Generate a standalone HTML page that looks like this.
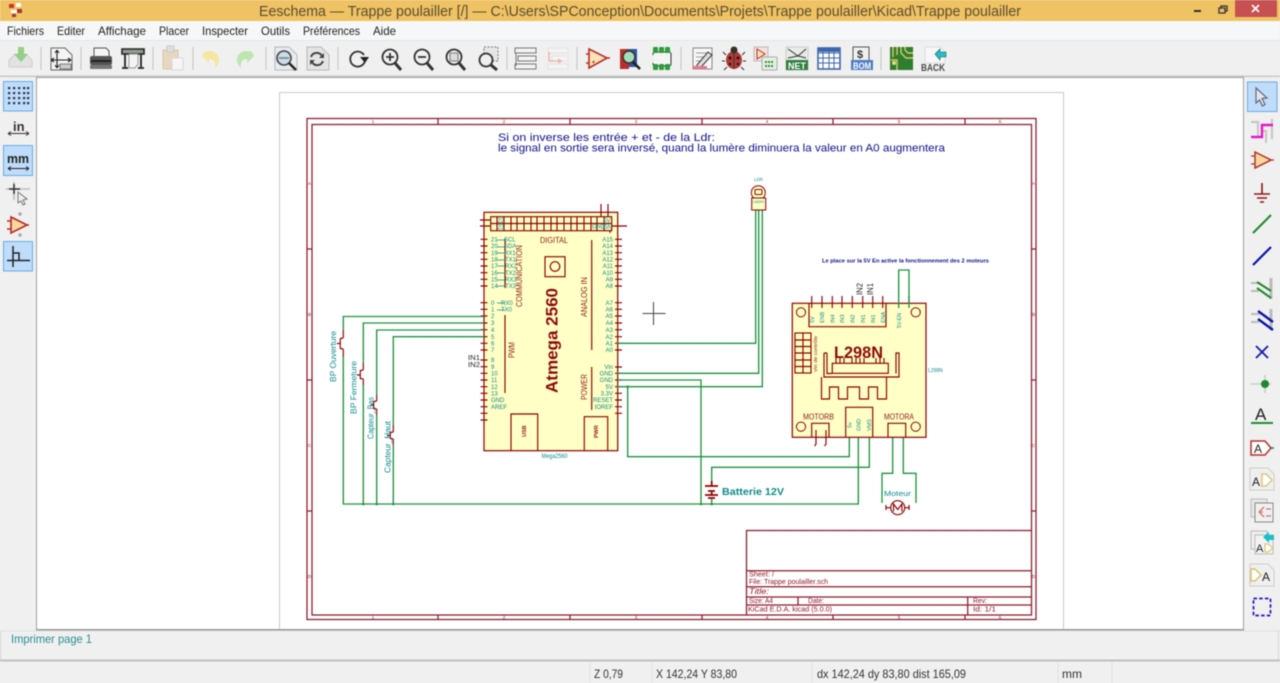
<!DOCTYPE html>
<html lang="fr"><head><meta charset="utf-8"><title>Eeschema</title>
<style>
html,body{margin:0;padding:0;background:#f0f0f0;width:1280px;height:683px;overflow:hidden}
svg{display:block;filter:blur(.5px)}
text{font-family:"Liberation Sans",sans-serif}
.r{stroke:#8c1a2a;fill:none;stroke-width:1.25}
.s{stroke:#8c0000;fill:none;stroke-width:1.15}
.w{stroke:#1f9440;fill:none;stroke-width:1.35}
.t{fill:#108a8a;font-size:6px}
.m{fill:#222;font-size:12px}
.st{fill:#333;font-size:12px}
.d{fill:#8c1a1a;font-size:8px}
</style></head><body>
<svg width="1280" height="683" viewBox="0 0 1280 683" xmlns="http://www.w3.org/2000/svg">
<!-- window chrome -->
<rect width="1280" height="683" fill="#f0f0f0"/>
<rect width="1280" height="21" fill="#efc263"/>
<rect y="21" width="1280" height="20" fill="#f6f7f8"/>
<rect y="41" width="1280" height="35" fill="#f0f0f0"/>
<rect y="40" width="1280" height="1" fill="#e6e6e6"/>
<text x="259" y="16" font-size="14.5" fill="#5a4d33" textLength="762" lengthAdjust="spacingAndGlyphs">Eeschema — Trappe poulailler [/] — C:\Users\SPConception\Documents\Projets\Trappe poulailler\Kicad\Trappe poulailler</text>
<g transform="translate(9,3)"><rect x="0" y="1" width="5" height="4" fill="#c33"/><rect x="7" y="0" width="5" height="4" fill="#fff"/><rect x="2" y="7" width="6" height="3" fill="#fff"/><rect x="8" y="6" width="5" height="4" fill="#a33"/><rect x="3" y="11" width="4" height="3" fill="#a33"/></g>
<rect x="1235" y="0" width="42" height="17" fill="#c75050"/>
<path d="M1252 5l7 7M1259 5l-7 7" stroke="#fff" stroke-width="1.6"/>
<rect x="1194" y="10" width="7" height="2" fill="#333"/>
<path d="M1219 8h6v5h-6zM1221 8V6h6v5h-2" fill="none" stroke="#333" stroke-width="1.3"/>
<text class="m" x="7" y="35" textLength="37" lengthAdjust="spacingAndGlyphs">Fichiers</text>
<text class="m" x="57" y="35" textLength="28" lengthAdjust="spacingAndGlyphs">Editer</text>
<text class="m" x="98" y="35" textLength="48" lengthAdjust="spacingAndGlyphs">Affichage</text>
<text class="m" x="159" y="35" textLength="30" lengthAdjust="spacingAndGlyphs">Placer</text>
<text class="m" x="202" y="35" textLength="46" lengthAdjust="spacingAndGlyphs">Inspecter</text>
<text class="m" x="261" y="35" textLength="29" lengthAdjust="spacingAndGlyphs">Outils</text>
<text class="m" x="303" y="35" textLength="57" lengthAdjust="spacingAndGlyphs">Préférences</text>
<text class="m" x="373" y="35" textLength="23" lengthAdjust="spacingAndGlyphs">Aide</text>
<!-- separators -->
<path d="M41 47v23M81 47v23M153 47v23M193 47v23M266 47v23M338 47v23M507 47v23M577 47v23M681 47v23M881 47v23" stroke="#c4c4c4"/>

<!-- TOP ICONS -->
<g id="ti">
<!-- open -->
<path d="M9 67v-7l6-6h4v6h3v-6h4l6 6v7z" fill="#e2e2e2" stroke="#d0d0d0"/>
<path d="M22 47h6v7h4l-7 8-7-8h4z" fill="#93cf85" transform="translate(-4,0)"/>
<!-- page settings -->
<path d="M51 48h14l7 7v15H51z" fill="#f4f4f4" stroke="#666"/>
<path d="M57 50v18M51 60h20M57 50l-2 3M57 50l2 3M57 68l-2-3M57 68l2-3M51 60l3-2M51 60l3 2M71 60l-3-2M71 60l-3 2" stroke="#222" fill="none" stroke-width="1.1"/>
<rect x="60" y="64" width="11" height="5" fill="#ccc" stroke="#555" stroke-width=".7"/>
<!-- print -->
<path d="M94 48h12l3 3v6H94z" fill="#f4f4f4" stroke="#555"/>
<rect x="90" y="56" width="22" height="9" rx="2" fill="#555"/>
<rect x="91" y="60" width="20" height="2" fill="#222"/>
<rect x="90" y="65" width="22" height="4" rx="1" fill="#777"/>
<!-- plotter -->
<path d="M122 49h22v5h-22z" fill="#8fa090" stroke="#222" stroke-width="1.6"/>
<path d="M125 54v13M141 54v13M122 68h6M138 68h6" stroke="#222" stroke-width="1.8"/>
<path d="M129 54h9v10l-3 4h-6z" fill="#f4f4f4" stroke="#777" stroke-width=".7"/>
<!-- paste -->
<rect x="163" y="50" width="15" height="19" rx="1" fill="#e8d7c0" stroke="#d8c5a8"/>
<rect x="167" y="46" width="7" height="6" fill="#ddd" stroke="#ccc"/>
<rect x="172" y="58" width="11" height="12" fill="#f6f6f6" stroke="#d8d8d8"/>
<!-- undo/redo -->
<path d="M205 52c8-3 15 1 15 8 0 4-2 6-4 8 1-5-1-9-6-9v4l-7-7z" fill="#f6e6a0" transform="translate(-1,0)"/>
<path d="M253 52c-8-3-15 1-15 8 0 4 2 6 4 8-1-5 1-9 6-9v4l7-7z" fill="#bfe6b0" transform="translate(-1,0)"/>
<!-- find doc -->
<path d="M275 47h14l8 8v15h-22z" fill="#e6ebee" stroke="#b8b8b8"/>
<circle cx="284" cy="58" r="7" fill="#c9dceb" stroke="#444" stroke-width="1.6"/>
<path d="M279 58h10" stroke="#777" stroke-width="1.4"/>
<path d="M289 63l7 7" stroke="#222" stroke-width="2.4"/>
<!-- refresh doc -->
<path d="M307 47h14l8 8v15h-22z" fill="#e4e4e4" stroke="#b8b8b8"/>
<path d="M311 57a6 6 0 0 1 11-1M323 61a6 6 0 0 1-11 1" stroke="#444" stroke-width="2" fill="none"/>
<path d="M324 53v5h-5zM310 65v-5h5z" fill="#444"/>
<!-- redraw -->
<path d="M365 55a7.500 7.500 0 1 0 1 6" stroke="#333" stroke-width="1.800" fill="none" transform="translate(-1,0)"/>
<path d="M360 57h9l-4 6z" fill="#222"/>
<!-- zooms -->
<g fill="none" stroke="#333" stroke-width="1.800">
<circle cx="390" cy="57" r="7.500"/><path d="M395 63l6 7" stroke-width="3"/><path d="M386 57h8M390 53v8"/>
<circle cx="422" cy="57" r="7.500"/><path d="M427 63l6 7" stroke-width="3"/><path d="M418 57h8"/>
<circle cx="454" cy="57" r="7.500"/><path d="M459 63l6 7" stroke-width="3"/><rect x="450" y="53" width="8" height="8" stroke="#888" fill="#ddd" stroke-width="1.200"/>
<rect x="484" y="47" width="14" height="14" stroke="#777" fill="#e6e6e6" stroke-width="1" stroke-dasharray="2 1.500"/>
<circle cx="486" cy="60" r="6.500" fill="#f0f0f0"/><path d="M491 65l6 5" stroke-width="3"/>
</g>
<!-- hierarchy -->
<g fill="#f2f2f2" stroke="#777" stroke-width="1">
<rect x="515" y="48" width="21" height="5"/><rect x="518" y="56" width="18" height="5"/><rect x="515" y="64" width="21" height="5"/>
</g>
<path d="M516 53v13" stroke="#777"/>
<g fill="#f4f4f4" stroke="#e2e2e2"><rect x="548" y="48" width="20" height="5"/><rect x="552" y="56" width="16" height="5"/><rect x="548" y="64" width="20" height="5"/></g>
<path d="M549 52v9h12l-3-2M561 61l-3 2" stroke="#eeb0a8" fill="none" stroke-width="1.300"/>
<!-- opamp -->
<path d="M589 49l18 9-18 10z" fill="#fbe3b8" stroke="#b5312a" stroke-width="1.600"/>
<path d="M586 54h3M586 63h3M607 58h3" stroke="#b5312a" stroke-width="1.400"/>
<path d="M592 62h3M593.500 60.500v3" stroke="#a33" stroke-width=".8"/>
<!-- library browser -->
<rect x="620" y="49" width="9" height="20" fill="#b92d2d"/>
<rect x="629" y="49" width="8" height="18" fill="#2b56a8"/>
<circle cx="629" cy="57" r="6" fill="#a6dcb8" stroke="#333" stroke-width="1.500"/>
<path d="M633 62l7 7" stroke="#222" stroke-width="2.600"/>
<!-- footprint -->
<rect x="653" y="52" width="18" height="14" rx="2" fill="#f4f4f4" stroke="#333"/>
<g fill="#2e9b3c"><rect x="653" y="47" width="5" height="6" rx="1"/><rect x="659" y="47" width="5" height="6" rx="1"/><rect x="665" y="47" width="5" height="6" rx="1"/><rect x="653" y="64" width="5" height="6" rx="1"/><rect x="659" y="64" width="5" height="6" rx="1"/><rect x="665" y="64" width="5" height="6" rx="1"/></g>
<rect x="650" y="55" width="4" height="8" fill="#f0f0f0"/>
<!-- annotate -->
<rect x="693" y="48" width="19" height="21" fill="#f6f6f6" stroke="#888"/>
<path d="M696 53h13M696 57h11M696 61h8" stroke="#999"/>
<path d="M697 65l11-13 4 3-11 12-5 1z" fill="#ddd" stroke="#333"/>
<rect x="693" y="66" width="14" height="3" fill="#e8788a"/>
<!-- bug -->
<ellipse cx="734" cy="60" rx="8" ry="9" fill="#b23a3a"/>
<circle cx="734" cy="50" r="3.500" fill="#332"/>
<path d="M734 51v18M726 55l-3-3M742 55l3-3M725 61h-3M743 61h3M727 67l-3 3M741 67l3 3" stroke="#333" fill="none"/>
<circle cx="730" cy="58" r="1.500" fill="#311"/><circle cx="738" cy="58" r="1.500" fill="#311"/><circle cx="730" cy="64" r="1.300" fill="#311"/><circle cx="738" cy="64" r="1.300" fill="#311"/>
<!-- sym/chip -->
<rect x="754" y="47" width="14" height="14" fill="#f3dfdc" stroke="#bbb"/>
<path d="M757 49l8 5-8 5z" fill="#fbe3b8" stroke="#b5312a"/>
<rect x="762" y="57" width="15" height="13" rx="1" fill="#e4efe4" stroke="#aaa"/>
<path d="M765 62h9M765 66h9" stroke="#3a8f3a" stroke-width="2" stroke-dasharray="2 1"/>
<!-- NET -->
<rect x="786" y="47" width="22" height="23" fill="#e8ece8" stroke="#ccc"/>
<path d="M788 49l10 7 8-7M788 58l10-2 8 2" stroke="#333" fill="none"/>
<rect x="786" y="60" width="22" height="10" fill="#2f7f3d"/>
<text x="788" y="69" font-size="9.500" font-weight="bold" fill="#fff" textLength="18" lengthAdjust="spacingAndGlyphs">NET</text>
<!-- table -->
<rect x="818" y="48" width="22" height="21" fill="#fff" stroke="#3f66ad" stroke-width="1.600"/>
<path d="M818 53h22M818 58h22M818 63h22M823 48v21M829 48v21M834 48v21" stroke="#3f66ad"/>
<rect x="818" y="48" width="22" height="4" fill="#3f66ad"/>
<!-- BOM -->
<rect x="853" y="47" width="16" height="15" fill="#f0f0f0" stroke="#555"/>
<text x="857" y="58" font-size="11" font-weight="bold" fill="#333">$</text>
<rect x="851" y="60" width="22" height="10" fill="#4f7fc4"/>
<text x="853" y="69" font-size="9" font-weight="bold" fill="#fff" textLength="18" lengthAdjust="spacingAndGlyphs">BOM</text>
<!-- PCB -->
<rect x="890" y="47" width="23" height="23" fill="#2f7d2f"/>
<path d="M893 47v10M897 47v8M901 47v6l5 5h7M905 47v3l3 3h5M891 60h6v10" stroke="#d9c96a" fill="none" stroke-width="1.400"/>
<circle cx="894" cy="63" r="2" fill="#e8dc80"/>
<!-- BACK -->
<path d="M925 47h15l5 5v11h-20z" fill="#f7f7f7" stroke="#ddd"/>
<path d="M935 54l5-5v3h6v5h-6v3z" fill="#27bcc8" stroke="#166" stroke-width=".6"/>
<text x="921" y="71" font-size="10" font-weight="bold" fill="#4a4a4a" textLength="24" lengthAdjust="spacingAndGlyphs">BACK</text>
</g>

<!-- side panels -->
<rect x="0" y="76" width="37" height="555" fill="#f0f0f0"/>
<rect x="1243" y="76" width="37" height="555" fill="#f0f0f0"/>
<rect x="36" y="76" width="1208" height="555" fill="#a0a0a0"/>
<rect x="37" y="78" width="1206" height="551" fill="#fff"/>
<rect x="0" y="75.500" width="1280" height="1.500" fill="#c8c8c8"/>

<!-- left toolbar -->
<g fill="#bfdcfa" stroke="#66abe9">
<rect x="3.500" y="81.500" width="29" height="29.500"/>
<rect x="3.500" y="145.500" width="29" height="30"/>
<rect x="3.500" y="241.500" width="29" height="29.500"/>
</g>
<g fill="#27324a"><rect x="8" y="87" width="2.200" height="2.200"/><rect x="13" y="87" width="2.200" height="2.200"/><rect x="18" y="87" width="2.200" height="2.200"/><rect x="23" y="87" width="2.200" height="2.200"/><rect x="27" y="87" width="2.200" height="2.200"/>
<rect x="8" y="92" width="2.200" height="2.200"/><rect x="13" y="92" width="2.200" height="2.200"/><rect x="18" y="92" width="2.200" height="2.200"/><rect x="23" y="92" width="2.200" height="2.200"/><rect x="27" y="92" width="2.200" height="2.200"/>
<rect x="8" y="97" width="2.200" height="2.200"/><rect x="13" y="97" width="2.200" height="2.200"/><rect x="18" y="97" width="2.200" height="2.200"/><rect x="23" y="97" width="2.200" height="2.200"/><rect x="27" y="97" width="2.200" height="2.200"/>
<rect x="8" y="102" width="2.200" height="2.200"/><rect x="13" y="102" width="2.200" height="2.200"/><rect x="18" y="102" width="2.200" height="2.200"/><rect x="23" y="102" width="2.200" height="2.200"/><rect x="27" y="102" width="2.200" height="2.200"/></g>
<text x="13" y="131" font-size="13" fill="#333" font-weight="bold">in</text>
<path d="M8 133.500h21M8 133.500l3-2M8 133.500l3 2M29 133.500l-3-2M29 133.500l-3 2" stroke="#333" fill="none"/>
<text x="7" y="163" font-size="13" font-weight="bold" fill="#222" textLength="22" lengthAdjust="spacingAndGlyphs">mm</text>
<path d="M8 168.500h21M8 168.500l3-2M8 168.500l3 2M29 168.500l-3-2M29 168.500l-3 2" stroke="#222" fill="none"/>
<path d="M6 189h24M14 182v18" stroke="#bbb" stroke-width="1.600"/><path d="M9 189h11M14 184v10" stroke="#333" stroke-width="1.500"/>
<path d="M18 192l9 7-4 1 2 4-2 1-2-4-3 2z" fill="#eee" stroke="#777"/>
<path d="M11 217l16 8-16 8z" fill="#f8d79a" stroke="#b5282a" stroke-width="1.600"/>
<path d="M7 221h4M7 229h4M27 225h2" stroke="#b5282a" stroke-width="1.400"/>
<circle cx="20" cy="214" r="1.800" fill="#aaa"/><circle cx="20" cy="235" r="1.800" fill="#aaa"/>
<path d="M13 246v21M7 260.500h23M13 253h6v7" stroke="#222" stroke-width="1.500" fill="none"/>

<!-- right toolbar -->
<rect x="1247.500" y="82" width="29.500" height="29.500" fill="#bfdcfa" stroke="#66abe9"/>
<path d="M1256 88l11 10-5 .5 3 6-2.500 1.500-3-6-3.500 3z" fill="#dfe8f0" stroke="#667" stroke-width="1.200"/>
<path d="M1251 122h7v14M1258 122v16M1266 131v12M1272 119v20M1267 131h-4" stroke="#c4c4c4" stroke-width="2" fill="none"/>
<path d="M1251 137h11v-12h11" stroke="#e818c8" stroke-width="2.400" fill="none"/>
<path d="M1255 152l16 8-16 8z" fill="#f8d79a" stroke="#b5312a" stroke-width="1.500"/>
<path d="M1251 156h4M1251 164h4M1271 160h3" stroke="#b5312a" stroke-width="1.300"/>
<path d="M1262 183v11M1254 194h16M1257 198h10M1260 202h4" stroke="#8c1a1a" stroke-width="1.600" fill="none"/>
<path d="M1253 233l18-18" stroke="#1e8a2e" stroke-width="2"/>
<path d="M1253 265l18-18" stroke="#0c14a8" stroke-width="2.200"/>
<path d="M1271 278v21" stroke="#bbb" stroke-width="3"/><path d="M1251 283h9M1251 291h8" stroke="#bbb" stroke-width="2"/>
<path d="M1258 282l14 9M1258 288l14 10" stroke="#1e8a2e" stroke-width="2" fill="none" transform="translate(-1,0)"/>
<path d="M1271 309v21" stroke="#bbb" stroke-width="3"/><path d="M1251 314h9M1251 322h8" stroke="#bbb" stroke-width="2"/>
<path d="M1258 311l15 11M1258 319l15 11" stroke="#0c14a8" stroke-width="2.400" fill="none"/>
<path d="M1256 346l12 12M1268 346l-12 12" stroke="#141ca8" stroke-width="1.800"/>
<path d="M1251 384h20M1265 375v18" stroke="#ccc" stroke-width="1.600"/><circle cx="1265" cy="384" r="4" fill="#1a8a2a"/>
<text x="1255" y="420" font-size="17" fill="#222">A</text><rect x="1251" y="422" width="22" height="2" fill="#1f8f2f"/>
<path d="M1251 441h14l6 7-6 7h-14z" fill="#fff" stroke="#b5312a" stroke-width="1.500"/><path d="M1271 448h3" stroke="#1e8a2e" stroke-width="1.500"/><text x="1254" y="453" font-size="12" fill="#222">A</text>
<path d="M1250 468h18l6 6v16h-24z" fill="#efefef" stroke="#ccc"/><text x="1252" y="486" font-size="12" fill="#222">A</text><path d="M1262 474h4l6 6-6 6h-4z" fill="#fff" stroke="#dcc87a" stroke-width="1.500"/>
<rect x="1251" y="499" width="16" height="18" fill="#e6e6e6" stroke="#bbb"/><rect x="1255" y="503" width="18" height="19" fill="#f0f0f0" stroke="#888"/>
<path d="M1259 512l5-5M1259 512l5 5M1259 512h4M1266 509h5M1266 516h5" stroke="#c77" fill="none" stroke-width="1.300"/>
<rect x="1251" y="531" width="16" height="18" fill="#eee" stroke="#bbb"/><rect x="1255" y="535" width="18" height="19" fill="#f3f3f3" stroke="#bbb"/>
<text x="1256" y="552" font-size="11" fill="#222">A</text><path d="M1265 544h3l5 4-5 4h-3z" fill="#fff" stroke="#dcc87a" stroke-width="1.300"/>
<path d="M1263 537l6-5v3h5v5h-5v3z" fill="#1cc0c8"/>
<path d="M1250 564h18l6 6v16h-24z" fill="#efefef" stroke="#ccc"/><path d="M1251 569h4l6 6-6 6h-4z" fill="#fff" stroke="#d8c46a" stroke-width="1.500"/><text x="1262" y="581" font-size="12" fill="#222">A</text>
<rect x="1253.500" y="598.500" width="17" height="17" fill="none" stroke="#1c18b8" stroke-width="1.700" stroke-dasharray="3.500 2.200"/>

<!-- SHEET -->
<path d="M279.500 629V92.500H1063.500V629" fill="none" stroke="#c8c8c8"/>
<rect x="307" y="118.500" width="729" height="501" class="r"/>
<rect x="312" y="124.500" width="719.500" height="490.500" class="r"/>
<path d="M438 118v6M570 118v6M702 118v6M833 118v6M965 118v6M438 615v4M570 615v4M702 615v4M833 615v4M965 615v4M307 249h5M307 380h5M307 511h5M1031 249h5M1031 380h5M1031 511h5" class="r"/>
<g fill="#8c1a2a" font-size="4.500" text-anchor="middle">
<text x="373" y="123">1</text><text x="504" y="123">2</text><text x="636" y="123">3</text><text x="767" y="123">4</text><text x="899" y="123">5</text><text x="1000" y="123">6</text>
<text x="373" y="619">1</text><text x="504" y="619">2</text><text x="636" y="619">3</text><text x="767" y="619">4</text><text x="899" y="619">5</text><text x="1000" y="619">6</text>
<text x="309.500" y="185">A</text><text x="309.500" y="316">B</text><text x="309.500" y="447">C</text><text x="309.500" y="578">D</text>
<text x="1033.500" y="185">A</text><text x="1033.500" y="316">B</text><text x="1033.500" y="447">C</text><text x="1033.500" y="578">D</text>
</g>
<!-- title block -->
<path d="M1031 530.500H746.500V615M746.500 570.700H1031M746.500 586.700H1031M746.500 597H1031M746.500 605H1031M798 597v8M967.700 597v18" class="r"/>
<g fill="#8c1a2a" font-size="7">
<text x="749" y="576.500" textLength="25" lengthAdjust="spacingAndGlyphs">Sheet: /</text>
<text x="749" y="584" textLength="79" lengthAdjust="spacingAndGlyphs">File: Trappe poulailler.sch</text>
<text x="749" y="594" font-size="8.500" font-style="italic" textLength="20" lengthAdjust="spacingAndGlyphs">Title:</text>
<text x="749" y="603" textLength="24" lengthAdjust="spacingAndGlyphs">Size: A4</text>
<text x="808" y="603" textLength="16" lengthAdjust="spacingAndGlyphs">Date:</text>
<text x="973" y="603" textLength="14" lengthAdjust="spacingAndGlyphs">Rev:</text>
<text x="748" y="611.500" textLength="84" lengthAdjust="spacingAndGlyphs">KiCad E.D.A.  kicad (5.0.0)</text>
<text x="973" y="611.500" textLength="23" lengthAdjust="spacingAndGlyphs">Id: 1/1</text>
</g>
<g fill="#10108c" font-size="11">
<text x="498" y="141" textLength="217" lengthAdjust="spacingAndGlyphs">Si on inverse les entrée + et - de la Ldr:</text>
<text x="498" y="151.500" textLength="447" lengthAdjust="spacingAndGlyphs">le signal en sortie sera inversé, quand la lumère diminuera la valeur en A0 augmentera</text>
<text x="822" y="262.500" font-size="5.500" font-weight="bold" textLength="167" lengthAdjust="spacingAndGlyphs">Le place sur la 5V En active la fonctionnement des 2 moteurs</text>
</g>

<!-- ARDUINO -->
<rect x="484" y="212.300" width="133.700" height="238.400" fill="#ffffc6" stroke="#8c0000" stroke-width="1.200"/>
<rect x="490.700" y="216.700" width="121" height="14" class="s"/>
<path d="M491 223.500h120M497 217v13.500M504 217v13.500M511 217v13.500M517 217v13.500M524 217v13.500M531 217v13.500M537 217v13.500M544 217v13.500M551 217v13.500M557 217v13.500M564 217v13.500M571 217v13.500M577 217v13.500M584 217v13.500M591 217v13.500M597 217v13.500M604 217v13.500" class="s"/>
<path d="M480 220h10M480 226h10M612 226h15M601 217v-13M608 217v-13M610 231v2" class="s"/>
<text class="t" x="497.500" y="222.500">22</text><text class="t" x="497.500" y="229">23</text>
<text class="t" x="592" y="228.500" font-size="5">GND</text><text class="t" x="603" y="222.500" font-size="5">5V</text><text class="t" x="603" y="229" font-size="5">GN</text>
<path d="M480.500 239.300h7M480.500 246h7M480.500 252.700h7M480.500 259.300h7M480.500 266h7M480.500 272.700h7M480.500 279.300h7M480.500 286h7M480.500 302.700h7M480.500 309.300h7M480.500 316h7M480.500 323h7M480.500 329.700h7M480.500 336.700h7M480.500 343.300h7M480.500 350h7M480.500 360h7M480.500 366.700h7M480.500 373.300h7M480.500 380h7M480.500 386.700h7M480.500 393.300h7M480.500 400h7M480.500 406.700h7M480.500 413.300h7M480.500 420h7" class="s"/>
<path d="M615 239.300h7M615 246h7M615 252.700h7M615 259.300h7M615 266h7M615 272.700h7M615 279.300h7M615 286h7M615 302.700h7M615 309.300h7M615 316h7M615 323h7M615 329.700h7M615 336.700h7M615 343.300h7M615 350h7M615 367h7M615 373.300h7M615 380h7M615 386.700h7M615 393.300h7M615 400h7M615 406.700h7M615 413.300h7" class="s"/>
<path d="M505 239v49M505 315v78M591.700 240v110M591.700 367v43" class="s"/>
<path d="M497 240h8M497 247h8M497 253h8M497 260h8M497 266h8M497 273h8M497 280h8M497 286h8M497 303h8M497 310h8" stroke="#108a8a" fill="none" stroke-width=".8"/>
<rect x="545" y="256.700" width="20" height="20" class="s"/><circle cx="555" cy="266.500" r="4.800" class="s"/>
<text class="d" x="540" y="243" font-size="8" textLength="28" lengthAdjust="spacingAndGlyphs">DIGITAL</text>
<text class="d" transform="translate(522,307) rotate(-90)" textLength="62" lengthAdjust="spacingAndGlyphs">COMMUNICATION</text>
<text class="d" transform="translate(514.500,358) rotate(-90)" textLength="16" lengthAdjust="spacingAndGlyphs">PWM</text>
<text class="d" transform="translate(587,317) rotate(-90)" textLength="40" lengthAdjust="spacingAndGlyphs">ANALOG IN</text>
<text class="d" transform="translate(587,400) rotate(-90)" textLength="26" lengthAdjust="spacingAndGlyphs">POWER</text>
<text transform="translate(557.500,393) rotate(-90)" font-size="17" font-weight="bold" fill="#8c0a0a" textLength="105" lengthAdjust="spacingAndGlyphs">Atmega 2560</text>
<path d="M511 450.700V414h26.700v36.700M584.300 450.700V416.700h23.400v34" class="s"/>
<text transform="translate(526,437) rotate(-90)" font-size="5.500" fill="#8c1a1a" font-weight="bold">USB</text>
<text transform="translate(598,438) rotate(-90)" font-size="5.500" fill="#8c1a1a" font-weight="bold">PWR</text>
<text class="t" x="541.500" y="458" textLength="26" lengthAdjust="spacingAndGlyphs">Mega2560</text>
<text class="t" x="491" y="241.500">21</text><text class="t" x="491" y="248">20</text><text class="t" x="491" y="255">19</text><text class="t" x="491" y="261.500">18</text><text class="t" x="491" y="268">17</text><text class="t" x="491" y="275">16</text><text class="t" x="491" y="281.500">15</text><text class="t" x="491" y="288">14</text>
<text class="t" x="504" y="241.500">SCL</text><text class="t" x="504" y="248">SDA</text><text class="t" x="504" y="255">RX1</text><text class="t" x="505" y="261.500">TX1</text><text class="t" x="505" y="268">RX2</text><text class="t" x="505" y="275">TX2</text><text class="t" x="505" y="281.500">RX3</text><text class="t" x="505" y="288">TX3</text>
<text class="t" x="491" y="305">0</text><text class="t" x="491" y="311.500">1</text><text class="t" x="501" y="305">RX0</text><text class="t" x="501" y="311.500">TX0</text>
<text class="t" x="491" y="318">2</text><text class="t" x="491" y="325">3</text><text class="t" x="491" y="332">4</text><text class="t" x="491" y="339">5</text><text class="t" x="491" y="345.500">6</text><text class="t" x="491" y="352">7</text>
<text class="t" x="491" y="362">8</text><text class="t" x="491" y="369">9</text><text class="t" x="491" y="375.500">10</text><text class="t" x="491" y="382">11</text><text class="t" x="491" y="389">12</text><text class="t" x="491" y="395.500">13</text><text class="t" x="491" y="402">GND</text><text class="t" x="491" y="409">AREF</text>
<g text-anchor="end">
<text class="t" x="613" y="241.500">A15</text><text class="t" x="613" y="248">A14</text><text class="t" x="613" y="255">A13</text><text class="t" x="613" y="261.500">A12</text><text class="t" x="613" y="268">A11</text><text class="t" x="613" y="275">A10</text><text class="t" x="613" y="281.500">A9</text><text class="t" x="613" y="288">A8</text>
<text class="t" x="613" y="305">A7</text><text class="t" x="613" y="311.500">A6</text><text class="t" x="613" y="318">A5</text><text class="t" x="613" y="325">A4</text><text class="t" x="613" y="332">A3</text><text class="t" x="613" y="339">A2</text><text class="t" x="613" y="345.500">A1</text><text class="t" x="613" y="352">A0</text>
<text class="t" x="613" y="369">Vin</text><text class="t" x="613" y="375.500">GND</text><text class="t" x="613" y="382">GND</text><text class="t" x="613" y="389">5V</text><text class="t" x="613" y="395.500">3.3V</text><text class="t" x="613" y="402">RESET</text><text class="t" x="613" y="409">IOREF</text>
</g>
<g fill="#222" font-size="7.500"><text x="468" y="360" textLength="12" lengthAdjust="spacingAndGlyphs">IN1</text><text x="468" y="367" textLength="12" lengthAdjust="spacingAndGlyphs">IN2</text></g>

<!-- wires -->
<path class="w" d="M484 316.500H343.300V504H859M484 323H363.300V504M484 330H376.700V504M484 336.700H393.300V504M617 343.300H755.700V210M617 373.300H758.700V210M617 386.700H762.300V210M617 380H701V504M627.700 386.700V456.700H849.300V436.700M711.700 481V467.300H869.300V435M711.700 498V504M858.300 504V436.700M892.700 430V473.300H882V503M903.300 430V473.300H916V503M898.700 296V270H909V303"/>
<path d="M343.300 330v27M363.300 363v22M376.700 395v20M393.300 425v20" stroke="#fff" stroke-width="2.500" fill="none"/>
<g fill="#1f9440"><circle cx="363.300" cy="504" r="1.300"/><circle cx="376.700" cy="504" r="1.300"/><circle cx="393.300" cy="504" r="1.300"/><circle cx="701" cy="504" r="1.300"/><circle cx="711.700" cy="504" r="1.300"/><circle cx="627.700" cy="386.700" r="1.300"/></g>
<path class="s" d="M343.300 330v8M343.300 349v8M343.300 338l-3 .5v10l3 .5M340 343.500h-3M363.300 363v7M363.300 379v6M363.300 370l-3 .5v8l3 .5M360 375h-3M376.700 395v6M376.700 409v6M376.700 401l-3 .5v7l3 .5M373.500 405h-3M393.300 425v7M393.300 439v6M393.300 432l-3 .5v6l3 .5M390 435.500h-3"/>
<g fill="#108a8a" font-size="8">
<text transform="translate(336,382) rotate(-90)" textLength="51" lengthAdjust="spacingAndGlyphs">BP Ouverture</text>
<text transform="translate(356.500,414) rotate(-90)" textLength="53" lengthAdjust="spacingAndGlyphs">BP Fermeture</text>
<text transform="translate(373.500,439) rotate(-90)" textLength="42" lengthAdjust="spacingAndGlyphs">Capteur_Bas</text>
<text transform="translate(390.500,473) rotate(-90)" textLength="52" lengthAdjust="spacingAndGlyphs">Capteur_Haut</text>
</g>
<!-- LDR -->
<circle cx="758.300" cy="192.700" r="7" fill="#ffffc6" stroke="#8c0000"/>
<rect x="751.700" y="198" width="14" height="12" fill="#ffffc6" stroke="#8c0000"/>
<rect x="755" y="189.500" width="7" height="5" rx="1" fill="none" stroke="#8c0000"/>
<text x="754" y="181" font-size="4.500" fill="#108a8a">LDR</text>
<text x="753" y="203" font-size="3.500" fill="#108a8a">LM393</text>
<!-- battery -->
<path d="M711.700 481v5M705 486h13M708 491h7M711.700 491v4M705 495h13M708 498h7" stroke="#8c0000" stroke-width="1.700" fill="none"/>
<text x="722" y="495" font-size="10" font-weight="bold" fill="#108a8a" textLength="62" lengthAdjust="spacingAndGlyphs">Batterie 12V</text>
<!-- L298N -->
<rect x="792.300" y="303.300" width="133.700" height="134" fill="#ffffc6" stroke="#8c0000" stroke-width="1.200"/>
<path d="M809 303.300v23.400h77v-23.400" class="s"/>
<path class="s" d="M811.700 296v12M822 296v12M832.300 296v12M842 296v12M852.300 296v12M862.700 296v12M872.700 296v12M882.700 296v12"/>
<path class="w" d="M898.700 296v12M909 296v12"/>
<g fill="none" stroke="#8c0000"><circle cx="801" cy="312.300" r="4.600"/><circle cx="915.700" cy="312.300" r="4.600"/><circle cx="801" cy="426.700" r="4.600"/><circle cx="915.700" cy="426.700" r="4.600"/></g>
<g fill="#108a8a" font-size="5.500">
<text transform="translate(814,323) rotate(-90)">5V</text><text transform="translate(824,323) rotate(-90)">ENB</text><text transform="translate(834.500,323) rotate(-90)">IN4</text><text transform="translate(844,323) rotate(-90)">IN3</text><text transform="translate(854.500,323) rotate(-90)">IN2</text><text transform="translate(865,323) rotate(-90)">IN1</text><text transform="translate(875,323) rotate(-90)">IN1</text><text transform="translate(885,323) rotate(-90)">ENA</text>
<text transform="translate(901,328) rotate(-90)" textLength="15" lengthAdjust="spacingAndGlyphs">5V-EN</text>
<text transform="translate(851.500,428) rotate(-90)">5v</text><text transform="translate(860.500,431) rotate(-90)">GND</text><text transform="translate(871,431) rotate(-90)">VMS</text>
<text x="928" y="372" font-size="5">L298N</text>
</g>
<g fill="#222" font-size="8.500"><text transform="translate(862.500,295) rotate(-90)" textLength="12" lengthAdjust="spacingAndGlyphs">IN2</text><text transform="translate(873,295) rotate(-90)" textLength="12" lengthAdjust="spacingAndGlyphs">IN1</text></g>
<rect x="795" y="333" width="16" height="40" class="s"/>
<path class="s" d="M795 340h16M795 346.500h16M795 353h16M795 360h16M795 366.500h16M803 333v40"/>
<text transform="translate(817,372) rotate(-90)" font-size="4.500" fill="#8c1a1a" textLength="36" lengthAdjust="spacingAndGlyphs">Vin de contrôle</text>
<text x="834" y="358" font-size="17" font-weight="bold" fill="#8c0a0a" textLength="49" lengthAdjust="spacingAndGlyphs">L298N</text>
<path class="s" d="M836 363v-5M840 363v-5M844 363v-5M852 363v-5M856 363v-5M860 363v-5M864 363v-5M876 363v-5M880 363v-5M884 363v-5"/>
<rect x="832.300" y="363.300" width="56" height="10" class="s"/>
<path class="s" d="M824 353v24h75v-24h-3v20.500M827 353v20.500h5M824 353h3M821.500 377v22h8v-12h9v12h9v-12h12v12h9v-12h9v12h9v-22"/>
<text class="d" x="803" y="419.500" font-size="7.500" textLength="31" lengthAdjust="spacingAndGlyphs">MOTORB</text>
<text class="d" x="884" y="419.500" font-size="7.500" textLength="30" lengthAdjust="spacingAndGlyphs">MOTORA</text>
<path class="s" d="M811.700 437.300V423.300H829V437.300M845.700 437.300V407.300H872.700V437.300M888 437.300V423.300H905.700V437.300M816 430v14l-1.500 2M826 430v14l-1.500 2"/>
<!-- Motor -->
<circle cx="897.700" cy="507.700" r="7" class="s"/>
<path class="s" d="M893.500 511.500v-7.500l4.200 5.500 4.200-5.500v7.500M886 507.700h4.700M904.700 507.700h5M886 505v5M909 505v5"/>
<text x="884" y="496" font-size="7" fill="#108a8a" textLength="27" lengthAdjust="spacingAndGlyphs">Moteur</text>

<!-- cursor -->
<path d="M642.500 313.500h23M653.500 302v23" stroke="#444" stroke-width="1"/>

<!-- bottom -->
<rect x="0" y="629" width="1280" height="54" fill="#f0f0f0"/>
<rect x="36" y="629" width="1208" height="1.500" fill="#999"/>
<rect x="0" y="630.500" width="1280" height=".8" fill="#ddd"/>
<rect x="0" y="659.500" width="1280" height="2" fill="#c0c0c0"/>
<path d="M.5 631v29M1278.500 631v29" stroke="#d4d4d4"/>
<text x="11" y="643" font-size="12" fill="#2a8f8f" textLength="81" lengthAdjust="spacingAndGlyphs">Imprimer page 1</text>
<path d="M590 662v21M652 662v21M812 662v21M1058 662v21M1112 662v21" stroke="#e0e0e0"/>
<text class="st" x="594" y="678" textLength="29" lengthAdjust="spacingAndGlyphs">Z 0,79</text>
<text class="st" x="656" y="678" textLength="81" lengthAdjust="spacingAndGlyphs">X 142,24  Y 83,80</text>
<text class="st" x="817" y="678" textLength="149" lengthAdjust="spacingAndGlyphs">dx 142,24  dy 83,80  dist 165,09</text>
<text class="st" x="1062" y="678" textLength="20" lengthAdjust="spacingAndGlyphs">mm</text>
</svg>
</body></html>
